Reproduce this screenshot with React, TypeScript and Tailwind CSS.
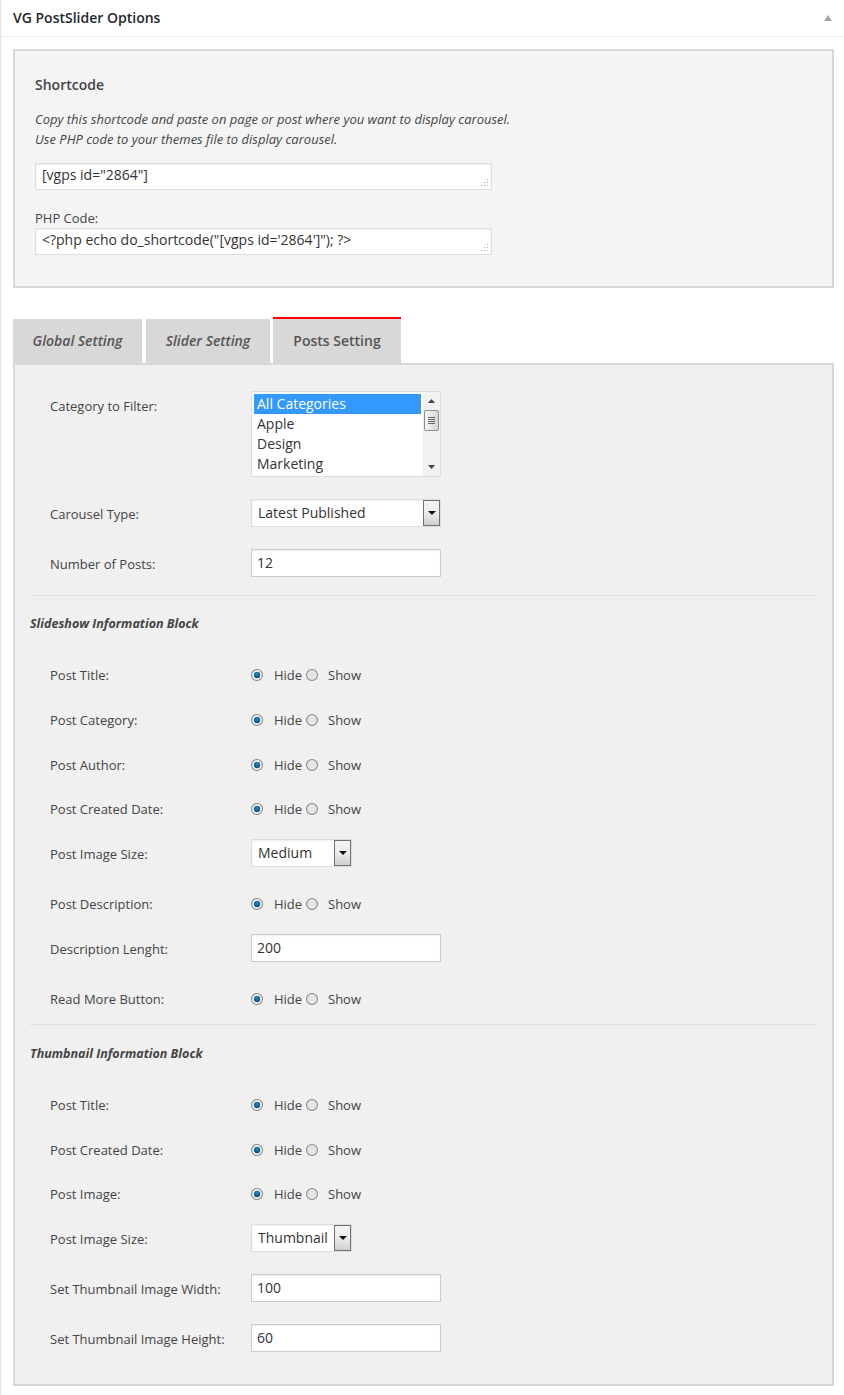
const F = "font-['Open_Sans',sans-serif]";

function Grip() {
  return (
    <svg className="absolute right-[2px] bottom-[2px]" width="9" height="9" viewBox="0 0 9 9">
      <g fill="#aaa">
        <rect x="7" y="1" width="1" height="1" />
        <rect x="7" y="4" width="1" height="1" />
        <rect x="4" y="4" width="1" height="1" />
        <rect x="7" y="7" width="1" height="1" />
        <rect x="4" y="7" width="1" height="1" />
        <rect x="1" y="7" width="1" height="1" />
      </g>
    </svg>
  );
}

function Area({ value }: { value: string }) {
  return (
    <div className="relative w-[457px] h-[27px] bg-white border border-[#ddd] pl-[6px] pt-[1px] text-[14px] leading-[20px] text-[#333] shadow-[inset_0_1px_2px_rgba(0,0,0,0.07)] whitespace-pre">
      {value}
      <Grip />
    </div>
  );
}

function Caret() {
  return (
    <svg width="8" height="4" viewBox="0 0 8 4">
      <path d="M0 0h8L4 4z" fill="#111" />
    </svg>
  );
}

function Select({ value, width }: { value: string; width: string }) {
  return (
    <div className={`relative h-[28px] ${width} bg-white border border-[#ddd] pl-[6px] text-[14px] leading-[25px] text-[#333] shadow-[inset_0_1px_2px_rgba(0,0,0,0.07)]`}>
      {value}
      <div className="absolute right-0 top-0 bottom-0 w-[17px] border border-[#707070] bg-gradient-to-b from-[#f4f4f4] via-[#ececec] to-[#cfcfcf] flex justify-center pt-[10px]">
        <div className="h-[4px] flex"><Caret /></div>
      </div>
    </div>
  );
}

function TextInput({ value }: { value: string }) {
  return (
    <div className="h-[28px] w-[190px] bg-white border border-[#ccc] pl-[5px] text-[14px] leading-[25px] text-[#333] shadow-[inset_0_1px_2px_rgba(0,0,0,0.07)]">
      {value}
    </div>
  );
}

function Radio({ checked, id }: { checked?: boolean; id: string }) {
  return (
    <svg width="14" height="14" viewBox="0 0 14 14" className={`shrink-0 ${checked ? "ml-[-1px]" : ""}`}>
      <defs>
        <radialGradient id={id} cx="50%" cy="35%" r="65%">
          <stop offset="0%" stopColor="#2a8cc2" />
          <stop offset="100%" stopColor="#0a4a75" />
        </radialGradient>
      </defs>
      <circle cx="7" cy="7" r="5.5" fill={checked ? "#eef2f4" : "#e4e4e4"} stroke="#8a8a8a" strokeWidth="1.1" />
      {checked && <circle cx="7" cy="7" r="3.2" fill={`url(#${id})`} />}
    </svg>
  );
}

function Label({ children, pt }: { children: string; pt: string }) {
  return <div className={`w-[201px] shrink-0 text-[13px] leading-[18px] text-[#444] ${pt}`}>{children}</div>;
}

function RadioRow({ label, mt }: { label: string; mt: string }) {
  return (
    <div className={`flex items-center h-[24px] ${mt}`}>
      <Label pt="pt-0">{label}</Label>
      <div className="flex items-center text-[13px] leading-[18px] text-[#444]">
        <div className="w-[23px]"><Radio checked id={`c-${label}-${mt}`.replace(/[^a-z0-9]/gi, "")} /></div>
        <div className="w-[31px]">Hide</div>
        <div className="w-[23px]"><Radio id={`u-${label}-${mt}`.replace(/[^a-z0-9]/gi, "")} /></div>
        <div>Show</div>
      </div>
    </div>
  );
}

function ControlRow({ label, mt, children }: { label: string; mt: string; children: React.ReactNode }) {
  return (
    <div className={`flex items-center ${mt}`}>
      <Label pt="pt-[2px]">{label}</Label>
      {children}
    </div>
  );
}

function ListBox() {
  const items = ["All Categories", "Apple", "Design", "Marketing"];
  return (
    <div className="w-[190px] h-[86px] bg-white border border-[#ddd] flex text-[14px] text-[#333]">
      <div className="flex-1 pl-[2px] pt-[2px] pr-[2px]">
        {items.map((t, i) => (
          <div key={t} className={`h-[20px] leading-[20px] pl-[3px] ${i === 0 ? "bg-[#3399ff] text-white" : ""}`}>{t}</div>
        ))}
      </div>
      <div className="w-[17px] bg-[#f1f1f1] flex flex-col items-center relative">
        <svg className="mt-[7px]" width="7" height="4" viewBox="0 0 7 4"><path d="M3.5 0L7 4H0z" fill="#444" /></svg>
        <div className="mt-[7px] w-[15px] h-[21px] rounded-[2px] border border-[#8f8f8f] bg-gradient-to-r from-[#f4f4f4] to-[#d6d6d6] flex flex-col items-center justify-center gap-[1px]">
          <div className="w-[7px] h-[1px] bg-[#666]" />
          <div className="w-[7px] h-[1px] bg-[#666]" />
          <div className="w-[7px] h-[1px] bg-[#666]" />
          <div className="w-[7px] h-[1px] bg-[#666]" />
        </div>
        <svg className="absolute bottom-[7px]" width="7" height="4" viewBox="0 0 7 4"><path d="M0 0h7L3.5 4z" fill="#444" /></svg>
      </div>
    </div>
  );
}

function Tab({ label, width, active, gap }: { label: string; width: string; active?: boolean; gap: string }) {
  return (
    <div className={`${width} ${gap} bg-[#d9d7d7] flex items-center justify-center pb-[2px] text-[14px] font-semibold text-[#555] ${active ? "border-t-2 border-[#f00] h-[47px]" : "h-[45px] italic"}`}>
      {label}
    </div>
  );
}

function Heading({ children, mt }: { children: string; mt: string }) {
  return <div className={`${mt} ml-[-20px] text-[12.5px] leading-[18px] font-bold italic text-[#444]`}>{children}</div>;
}

export default function App() {
  return (
    <div className={`${F} w-[844px] h-[1395px] bg-white border-l border-[#e5e5e5] overflow-hidden`}>
      <div className="h-[37px] border-b border-[#eee] pl-[12px] pr-[12px] flex items-center justify-between">
        <div className="text-[14px] font-semibold text-[#23282d] pb-[2px]">VG PostSlider Options</div>
        <svg width="8" height="6" viewBox="0 0 8 6"><path d="M4 0l4 6H0z" fill="#a0a5aa" /></svg>
      </div>

      <div className="ml-[12px] mt-[12px] w-[821px] h-[239px] border-2 border-[#d8d8d8] bg-[#f4f4f4] pl-[20px] pt-[24px] text-[#444]">
        <div className="text-[14px] leading-[20px] font-semibold">Shortcode</div>
        <div className="mt-[14px] text-[13px] leading-[20px] italic">
          <div>Copy this shortcode and paste on page or post where you want to display carousel.</div>
          <div>Use PHP code to your themes file to display carousel.</div>
        </div>
        <div className="mt-[14px]"><Area value={'[vgps id="2864"]'} /></div>
        <div className="mt-[18px] text-[13px] leading-[20px]">PHP Code:</div>
        <div className="mt-0"><Area value={`<?php echo do_shortcode("[vgps id='2864']"); ?>`} /></div>
      </div>

      <div className="ml-[12px] mt-[29px] flex items-end h-[47px]">
        <Tab label="Global Setting" width="w-[129px]" gap="mr-[4px]" />
        <Tab label="Slider Setting" width="w-[124px]" gap="mr-[3px]" />
        <Tab label="Posts Setting" width="w-[128px]" gap="" active />
      </div>

      <div className="ml-[12px] mt-[-1px] w-[821px] h-[1023px] border-2 border-[#d8d8d8] bg-[#f0f0f0] pl-[35px] pr-[16px] pt-[26px]">
        <div className="flex items-start">
          <Label pt="pt-[6px]">Category to Filter:</Label>
          <ListBox />
        </div>
        <ControlRow label="Carousel Type:" mt="mt-[22px]"><Select value="Latest Published" width="w-[190px]" /></ControlRow>
        <ControlRow label="Number of Posts:" mt="mt-[22px]"><TextInput value="12" /></ControlRow>

        <div className="mt-[18px] ml-[-20px] h-[1px] bg-[#dfdfdf]" />
        <Heading mt="mt-[19px]">Slideshow Information Block</Heading>

        <RadioRow label="Post Title:" mt="mt-[30px]" />
        <RadioRow label="Post Category:" mt="mt-[21px]" />
        <RadioRow label="Post Author:" mt="mt-[21px]" />
        <RadioRow label="Post Created Date:" mt="mt-[20px]" />
        <ControlRow label="Post Image Size:" mt="mt-[18px]"><Select value="Medium" width="w-[101px]" /></ControlRow>
        <RadioRow label="Post Description:" mt="mt-[25px]" />
        <ControlRow label="Description Lenght:" mt="mt-[18px]"><TextInput value="200" /></ControlRow>
        <RadioRow label="Read More Button:" mt="mt-[25px]" />

        <div className="mt-[13px] ml-[-20px] h-[1px] bg-[#dfdfdf]" />
        <Heading mt="mt-[20px]">Thumbnail Information Block</Heading>

        <RadioRow label="Post Title:" mt="mt-[30px]" />
        <RadioRow label="Post Created Date:" mt="mt-[21px]" />
        <RadioRow label="Post Image:" mt="mt-[20px]" />
        <ControlRow label="Post Image Size:" mt="mt-[18px]"><Select value="Thumbnail" width="w-[101px]" /></ControlRow>
        <ControlRow label="Set Thumbnail Image Width:" mt="mt-[22px]"><TextInput value="100" /></ControlRow>
        <ControlRow label="Set Thumbnail Image Height:" mt="mt-[22px]"><TextInput value="60" /></ControlRow>
      </div>
    </div>
  );
}
